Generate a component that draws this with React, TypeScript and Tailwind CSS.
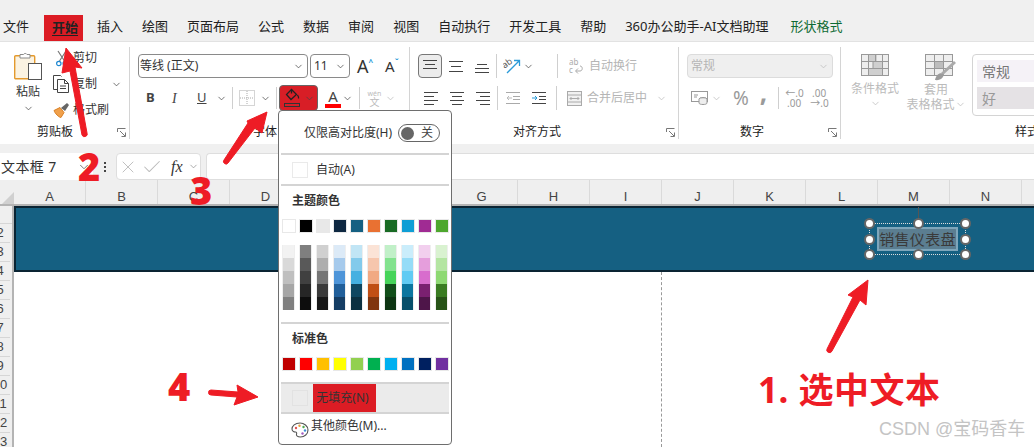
import { ChevronDown, Check, X } from "lucide-react";
import type { ReactNode } from "react";

const TABS = ["插入", "绘图", "页面布局", "公式", "数据", "审阅", "视图", "自动执行", "开发工具", "帮助", "360办公助手-AI文档助理"];
const COLS = ["A", "B", "C", "D", "E", "F", "G", "H", "I", "J", "K", "L", "M", "N", "O"];
const ROWS = ["2", "3", "4", "5", "6", "7", "8", "9", "10", "11", "12", "13"];

const THEME = ["bg-[#ffffff]", "bg-[#000000]", "bg-[#e8e8e8]", "bg-[#0e2841]", "bg-[#156082]", "bg-[#e97132]", "bg-[#196b24]", "bg-[#0f9ed5]", "bg-[#a02b93]", "bg-[#4ea72e]"];
const STANDARD = ["bg-[#c00000]", "bg-[#ff0000]", "bg-[#ffc000]", "bg-[#ffff00]", "bg-[#92d050]", "bg-[#00b050]", "bg-[#00b0f0]", "bg-[#0070c0]", "bg-[#002060]", "bg-[#7030a0]"];
const SHADES = [
  ["bg-[#f2f2f2]", "bg-[#d9d9d9]", "bg-[#bfbfbf]", "bg-[#a6a6a6]", "bg-[#808080]"],
  ["bg-[#7f7f7f]", "bg-[#595959]", "bg-[#404040]", "bg-[#262626]", "bg-[#0d0d0d]"],
  ["bg-[#d0d0d0]", "bg-[#aeaeae]", "bg-[#757575]", "bg-[#3a3a3a]", "bg-[#171717]"],
  ["bg-[#dceaf7]", "bg-[#a6caec]", "bg-[#4e95d9]", "bg-[#215f9a]", "bg-[#153d64]"],
  ["bg-[#c1e5f5]", "bg-[#83caeb]", "bg-[#45b0e1]", "bg-[#0f4761]", "bg-[#0b3041]"],
  ["bg-[#fbe3d6]", "bg-[#f6c6ad]", "bg-[#f1a983]", "bg-[#c04f15]", "bg-[#80350e]"],
  ["bg-[#c1f0c8]", "bg-[#83e28e]", "bg-[#47d45a]", "bg-[#124f1a]", "bg-[#0d3512]"],
  ["bg-[#caedfb]", "bg-[#95dcf7]", "bg-[#61cbf3]", "bg-[#0b769f]", "bg-[#074f6a]"],
  ["bg-[#f2cfee]", "bg-[#e59edc]", "bg-[#d86dcd]", "bg-[#7a2070]", "bg-[#4e1549]"],
  ["bg-[#d9f2d0]", "bg-[#b4e5a2]", "bg-[#8ed973]", "bg-[#3a7c22]", "bg-[#275317]"],
];

function Chev({ className = "" }: { className?: string }) {
  return <ChevronDown size={11} strokeWidth={1.6} className={`shrink-0 text-[#444] ${className}`} />;
}

function Launcher() {
  return (
    <svg width="9" height="9" viewBox="0 0 9 9" className="ml-auto mr-[3px] shrink-0" fill="none" stroke="#777">
      <path d="M.5 4V.5H8.500M3 3l5 5M4.500 8.500h4v-4" />
    </svg>
  );
}

function GroupLabel({ left, children }: { left: string; children: ReactNode }) {
  return (
    <div className="-mb-[1px] mt-auto flex h-[16px] items-center text-[12px] leading-none text-[#222]">
      <span className={left}>{children}</span>
      <Launcher />
    </div>
  );
}

function Lines({ rows, stroke = "#444", className = "" }: { rows: number[][]; stroke?: string; className?: string }) {
  return (
    <svg width="16" height="16" viewBox="0 0 16 16" className={`shrink-0 ${className}`} stroke={stroke} fill="none">
      {rows.map((r) => (
        <path key={r.join()} d={`M${r[0]} ${r[2] + 0.5}H${r[1]}`} />
      ))}
    </svg>
  );
}

function PasteIcon() {
  return (
    <svg width="28" height="30" viewBox="0 0 28 30" className="shrink-0">
      <rect x=".7" y="4.700" width="20" height="23" rx="1" fill="#fbf3e2" stroke="#e49a2d" strokeWidth="1.400" />
      <path d="M6 5.500V3.500h3.500a2 2 0 0 1 3.500 0H16v3.500H6z" fill="#fff" stroke="#8a8a8a" />
      <rect x="14.500" y="12.500" width="13" height="16" fill="#fff" stroke="#555" />
    </svg>
  );
}

function ScissorsIcon() {
  return (
    <svg width="12" height="17" viewBox="0 0 12 17" className="shrink-0" fill="none">
      <path d="M2 1l6.500 10M10 1L3.500 11" stroke="#777" strokeWidth="1.200" />
      <circle cx="2.800" cy="13.500" r="2.200" stroke="#1e88d2" strokeWidth="1.200" />
      <circle cx="9.200" cy="13.500" r="2.200" stroke="#1e88d2" strokeWidth="1.200" />
    </svg>
  );
}

function CopyIcon() {
  return (
    <svg width="16" height="18" viewBox="0 0 16 18" className="shrink-0" fill="#fff" stroke="#444">
      <path d="M4 14.500H.5V.5h7l1 1" fill="none" />
      <path d="M4.500 4.500h7l4 4v9h-11z" />
      <path d="M11.500 4.500v4h4M7 11h6M7 13.500h6" fill="none" />
    </svg>
  );
}

function BrushIcon() {
  return (
    <svg width="17" height="16" viewBox="0 0 17 16" className="shrink-0">
      <path d="M1 8.500l6-3 4 5-3 5c-2 0-6-4-7-7z" fill="#f0a04b" stroke="#d97f22" />
      <path d="M8 6l6-5 2 2-4 6z" fill="#666" />
    </svg>
  );
}

function BorderIcon() {
  return (
    <svg width="16" height="16" viewBox="0 0 16 16" className="shrink-0" fill="none" stroke="#aaa" strokeDasharray="1 1">
      <rect x=".5" y=".5" width="15" height="15" />
      <path d="M8 1v14M1 8h14" />
    </svg>
  );
}

function FillIcon() {
  return (
    <svg width="16" height="20" viewBox="0 0 16 20" className="shrink-0" fill="none">
      <path d="M7.500 1.500l-5 5 4.500 5 5.500-5z" stroke="#222" strokeWidth="1.300" />
      <path d="M7.500 1.500v4M13.500 7c1 1.500 1.500 2.500 1 3.500" stroke="#222" strokeWidth="1.300" />
      <rect x=".5" y="15.500" width="15" height="3" stroke="#333" />
    </svg>
  );
}

function OrientIcon() {
  return (
    <svg width="18" height="18" viewBox="0 0 18 18" className="shrink-0" fill="none">
      <text x="0" y="9" fontSize="9" fill="#555" transform="rotate(-35 5 8)">ab</text>
      <path d="M4 16L16 4M11 3.500h5.500V9" stroke="#2a9ad8" strokeWidth="1.300" />
    </svg>
  );
}

function WrapIcon() {
  return (
    <svg width="15" height="16" viewBox="0 0 15 16" className="shrink-0" fill="none">
      <text x="0" y="7" fontSize="8" fill="#aaa">ab</text>
      <text x="0" y="15" fontSize="8" fill="#aaa">c</text>
      <path d="M7 13h4c3 0 3-5 0-5M9 10.500L6.500 13 9 15.500" stroke="#aaa" />
    </svg>
  );
}

function MergeIcon() {
  return (
    <svg width="15" height="15" viewBox="0 0 15 15" className="shrink-0" fill="none" stroke="#aaa">
      <rect x=".5" y=".5" width="14" height="14" fill="#f1f1f1" />
      <path d="M1 4h13M1 11h13M3 7.500h9M4.500 6L3 7.500 4.500 9M10.500 6L12 7.500 10.500 9" />
    </svg>
  );
}

function IndentIcon({ dir }: { dir: "in" | "out" }) {
  const color = dir === "in" ? "#2a9ad8" : "#bbb";
  const lines = dir === "in" ? "#444" : "#aaa";
  return (
    <svg width="14" height="12" viewBox="0 0 14 12" className="shrink-0" fill="none">
      <path d="M0 .5h14M7 4.500h7M7 7.500h7M0 11.500h14" stroke={lines} />
      <path d={dir === "in" ? "M0 6h5M3 4l2 2-2 2" : "M1 6h5M3 4L1 6l2 2"} stroke={color} />
    </svg>
  );
}

function CellStyleIcon() {
  return (
    <svg width="28" height="22" viewBox="0 0 28 22" className="shrink-0" stroke="#999" fill="#eee">
      <rect x=".5" y=".5" width="27" height="21" />
      <rect x="7" y="1" width="9" height="6" fill="#cfcfcf" stroke="none" />
      <rect x="7" y="14" width="14" height="7" fill="#cfcfcf" stroke="none" />
      <rect x="12" y="7" width="9" height="7" fill="#cfcfcf" stroke="none" />
      <path d="M1 7.500h26M1 14.500h26M7.500 1v20M14.500 1v6M21.500 1v20M12 7.500v7" fill="none" />
    </svg>
  );
}

function TableStyleIcon() {
  return (
    <svg width="32" height="28" viewBox="0 0 32 28" className="shrink-0" fill="none">
      <rect x=".5" y=".5" width="27" height="21" fill="#eee" stroke="#999" />
      <rect x="10" y="8" width="9" height="7" fill="#bdbdbd" />
      <path d="M1 7.500h26M1 14.500h26M9.500 1v20M18.500 1v20" stroke="#999" />
      <path d="M30 8L17 20" stroke="#aaa" strokeWidth="3" />
      <path d="M10 26c1-5 5-8 8-6 2 3-3 7-8 6z" fill="#9b9b9b" />
    </svg>
  );
}

function PaletteIcon() {
  return (
    <svg width="18" height="16" viewBox="0 0 18 16" className="shrink-0" fill="none">
      <path d="M9 1C4 1 1 4 1 7c0 2 2 3 3.500 3 1 0 1.500 1 1 2-.5 1.500 1 3 4 3 4 0 7.500-3 7.500-7S13 1 9 1z" stroke="#555" strokeWidth="1.100" />
      <circle cx="5" cy="6" r="1.200" fill="#e05252" />
      <circle cx="8.500" cy="3.800" r="1.200" fill="#e9a23b" />
      <circle cx="12.500" cy="5" r="1.200" fill="#4fa84f" />
      <circle cx="14" cy="8.500" r="1.200" fill="#3d8fd6" />
      <circle cx="11.500" cy="11.500" r="1.200" fill="#a45bc1" />
    </svg>
  );
}

function Ribbon() {
  return (
    <div className="flex h-[103px] shrink-0 overflow-hidden border-t border-[#e2e2e2] bg-white text-[12px] text-[#333]">
      {/* clipboard */}
      <div className="my-[5px] flex w-[130px] shrink-0 flex-col border-r border-[#d4d4d4]">
        <div className="flex">
          <div className="ml-[14px] flex w-[28px] flex-col items-center pt-[4px]">
            <PasteIcon />
            <span className="mt-[3px] whitespace-nowrap leading-[16px]">粘贴</span>
            <Chev className="mt-[3px]" />
          </div>
          <div className="-mt-[2px] ml-[11px] flex flex-col">
            <div className="flex h-[26px] items-center gap-[5px] pl-[3px]"><ScissorsIcon /><span>剪切</span></div>
            <div className="flex h-[26px] items-center gap-[4px]"><CopyIcon /><span>复制</span><Chev className="ml-[10px]" /></div>
            <div className="flex h-[26px] items-center gap-[3px]"><BrushIcon /><span>格式刷</span></div>
          </div>
        </div>
        <GroupLabel left="ml-[37px]">剪贴板</GroupLabel>
      </div>

      {/* font */}
      <div className="my-[5px] flex w-[280px] shrink-0 flex-col border-r border-[#d4d4d4]">
        <div className="mt-[7px] flex h-[24px] items-center pl-[8px]">
          <div className="flex h-[24px] w-[170px] items-center justify-between rounded-[4px] border border-[#8a8a8a] pl-[1px] pr-[3px]">
            <span>等线 (正文)</span><Chev />
          </div>
          <div className="ml-[2px] flex h-[24px] w-[40px] items-center justify-between rounded-[4px] border border-[#8a8a8a] pl-[3px] pr-[3px]">
            <span>11</span><Chev />
          </div>
          <span className="ml-[7px] text-[18px] leading-none">A</span>
          <span className="-mt-[8px] text-[8px] font-bold text-[#2a9ad8]">^</span>
          <span className="ml-[12px] text-[15px] leading-none">A</span>
          <span className="-mt-[8px] text-[8px] font-bold text-[#2a9ad8]">ˇ</span>
        </div>
        <div className="mt-[8px] flex h-[24px] items-center pl-[16px]">
          <span className="w-[26px] text-[13px] font-bold text-[#444]">B</span>
          <span className="w-[25px] font-['Liberation_Serif',serif] text-[14px] italic text-[#444]">I</span>
          <span className="w-[19px] text-[13px] text-[#444] underline">U</span>
          <Chev />
          <div className="ml-[5px] h-[22px] w-px bg-[#cfcfcf]" />
          <div className="ml-[6px]"><BorderIcon /></div>
          <Chev className="ml-[5px]" />
          <div className="ml-[5px] h-[22px] w-px bg-[#cfcfcf]" />
          <div className="ml-[2px] flex h-[26px] w-[39px] items-center gap-[4px] rounded-[4px] border border-[#666] bg-[#d81e26] pl-[4px]">
            <FillIcon /><Chev className="text-[#222]" />
          </div>
          <div className="ml-[7px] flex w-[16px] flex-col items-center">
            <span className="text-[15px] leading-[16px] text-[#444]">A</span>
            <div className="h-[4px] w-[16px] bg-[#ff0000]" />
          </div>
          <Chev className="ml-[1px]" />
          <div className="ml-[6px] h-[22px] w-px bg-[#cfcfcf]" />
          <div className="ml-[7px] flex w-[15px] flex-col items-center leading-none text-[#bbb]">
            <span className="text-[7px]">wén</span>
            <span className="text-[10px]">文</span>
          </div>
          <Chev className="ml-[3px] text-[#bbb]" />
        </div>
        <GroupLabel left="ml-[123px]">字体</GroupLabel>
      </div>

      {/* alignment */}
      <div className="my-[5px] flex w-[269px] shrink-0 flex-col border-r border-[#d4d4d4]">
        <div className="mt-[7px] flex h-[24px] items-center pl-[8px]">
          <div className="flex h-[24px] w-[24px] items-center justify-center rounded-[4px] border border-[#777] bg-[#ececec]">
            <Lines rows={[[1, 15, 2], [3, 13, 6], [1, 15, 10]]} />
          </div>
          <Lines className="ml-[6px]" rows={[[1, 15, 3], [3, 13, 8], [1, 15, 13]]} />
          <Lines className="ml-[10px]" rows={[[3, 13, 6], [1, 15, 10], [1, 15, 14]]} />
          <div className="ml-[6px] h-[24px] w-px bg-[#cfcfcf]" />
          <div className="ml-[6px]"><OrientIcon /></div>
          <Chev className="ml-[2px]" />
          <div className="ml-[23px] h-[24px] w-px bg-[#cfcfcf]" />
          <div className="ml-[11px] flex items-center gap-[5px] text-[#b5b5b5]"><WrapIcon /><span>自动换行</span></div>
        </div>
        <div className="mt-[8px] flex h-[24px] items-center pl-[13px]">
          <Lines rows={[[1, 15, 2], [1, 11, 6], [1, 15, 10], [1, 11, 14]]} />
          <Lines className="ml-[10px]" rows={[[1, 15, 2], [3, 13, 6], [1, 15, 10], [3, 13, 14]]} />
          <Lines className="ml-[10px]" rows={[[1, 15, 2], [5, 15, 6], [1, 15, 10], [5, 15, 14]]} />
          <div className="ml-[6px] h-[24px] w-px bg-[#cfcfcf]" />
          <div className="ml-[8px]"><IndentIcon dir="out" /></div>
          <div className="ml-[12px]"><IndentIcon dir="in" /></div>
          <div className="ml-[10px] h-[24px] w-px bg-[#cfcfcf]" />
          <div className="ml-[10px] flex items-center gap-[5px] text-[#b5b5b5]"><MergeIcon /><span>合并后居中</span></div>
          <Chev className="ml-[9px] text-[#bbb]" />
        </div>
        <GroupLabel left="ml-[103px]">对齐方式</GroupLabel>
      </div>

      {/* number */}
      <div className="my-[5px] flex w-[162px] shrink-0 flex-col border-r border-[#d4d4d4]">
        <div className="mt-[7px] flex h-[24px] pl-[8px]">
          <div className="flex h-[24px] w-[146px] items-center justify-between rounded-[4px] border border-[#dcdcdc] bg-[#efefef] pl-[3px] pr-[3px] text-[#b5b5b5]">
            <span>常规</span><Chev className="text-[#bbb]" />
          </div>
        </div>
        <div className="mt-[8px] flex h-[24px] items-center pl-[12px] text-[#9a9a9a]">
          <svg width="17" height="14" viewBox="0 0 17 14" className="shrink-0" fill="none" stroke="#999">
            <rect x=".5" y=".5" width="16" height="10" />
            <ellipse cx="12" cy="8" rx="4" ry="1.500" fill="#ddd" />
            <path d="M8 8v4c0 2 8 2 8 0V8" fill="#eee" />
            <path d="M3 4h4M3 6h3" />
          </svg>
          <Chev className="ml-[3px] text-[#bbb]" />
          <span className="ml-[11px] text-[19px] leading-none">%</span>
          <span className="-mt-[12px] ml-[11px] text-[26px] font-bold leading-none">,</span>
          <div className="ml-[11px] h-[22px] w-px bg-[#cfcfcf]" />
          <span className="ml-[6px] w-[16px] whitespace-nowrap text-right text-[10px] leading-[10px]">←.0<br />.00</span>
          <span className="ml-[9px] w-[16px] whitespace-nowrap text-right text-[10px] leading-[10px]">.00<br />→.0</span>
        </div>
        <GroupLabel left="ml-[61px]">数字</GroupLabel>
      </div>

      {/* styles */}
      <div className="my-[5px] flex shrink-0 flex-col">
        <div className="mt-[7px] flex h-[62px]">
          <div className="ml-[10px] flex w-[48px] flex-col items-center text-[#bbb]">
            <CellStyleIcon />
            <span className="mt-[5px] whitespace-nowrap text-[12px] leading-[16px]">条件格式</span>
            <Chev className="mt-[1px] text-[#bbb]" />
          </div>
          <div className="ml-[8px] flex w-[58px] flex-col items-center text-[#bbb]">
            <div className="pl-[10px]"><TableStyleIcon /></div>
            <span className="whitespace-nowrap text-[12px] leading-[15px]">套用</span>
            <div className="flex items-center whitespace-nowrap text-[12px] leading-[15px]">表格格式<Chev className="text-[#bbb]" /></div>
          </div>
          <div className="ml-[7px] flex h-[62px] w-[80px] shrink-0 flex-col gap-[5px] rounded-[4px] border border-[#d4d4d4] py-[5px] pl-[4px]">
            <div className="flex h-[22px] items-center bg-[#f5f2f7] pl-[5px] text-[14px] text-[#777]">常规</div>
            <div className="flex h-[22px] items-center bg-[#e5e2e5] pl-[5px] text-[14px] text-[#999]">好</div>
          </div>
        </div>
        <div className="-mb-[1px] mt-auto flex h-[16px] items-center text-[12px] leading-none text-[#222]">
          <span className="ml-[174px] whitespace-nowrap">样式</span>
        </div>
      </div>
    </div>
  );
}

function FormulaBar() {
  return (
    <div className="mt-[9px] flex h-[27px] shrink-0 items-stretch">
      <div className="flex w-[93px] items-center justify-between rounded-r-[4px] bg-white pl-[1px] pr-[2px] text-[14px] tracking-[0.4px] text-[#333]">
        <span className="whitespace-nowrap">文本框 7</span>
        <ChevronDown size={14} strokeWidth={1.5} className="text-[#666]" />
      </div>
      <div className="ml-[6px] flex w-[12px] flex-col items-center justify-center gap-[2px]">
        <div className="size-[2px] bg-[#444]" /><div className="size-[2px] bg-[#444]" /><div className="size-[2px] bg-[#444]" />
      </div>
      <div className="ml-[5px] flex w-[85px] items-center rounded-[4px] border border-[#dedede] bg-white pl-[1px]">
        <X size={20} strokeWidth={1.1} className="shrink-0 text-[#bbb]" />
        <Check size={22} strokeWidth={1.1} className="ml-[3px] shrink-0 text-[#bbb]" />
        <span className="ml-[8px] font-['Liberation_Serif',serif] text-[16px] italic leading-none text-[#333]">fx</span>
        <ChevronDown size={11} strokeWidth={1.5} className="ml-[5px] shrink-0 text-[#888]" />
      </div>
      <div className="ml-[5px] flex-1 rounded-l-[4px] border border-r-0 border-[#dedede] bg-white" />
    </div>
  );
}

function Handle({ className }: { className: string }) {
  return <div className={`absolute size-[11px] rounded-full border-2 border-[#666] bg-white ${className}`} />;
}

function Sheet() {
  return (
    <div className="flex flex-1 flex-col overflow-hidden">
      <div className="flex h-[26px] shrink-0 border-b-2 border-[#b4b4b4] bg-[#efefef]">
        <div className="flex w-[14px] shrink-0 items-end justify-end">
          <div className="size-0 border-b-[12px] border-l-[12px] border-b-[#d0d0d0] border-l-transparent" />
        </div>
        {COLS.map((c) => (
          <div key={c} className="flex w-[72px] shrink-0 items-end justify-center border-r border-[#dadada] font-['Liberation_Sans',sans-serif] text-[13px] leading-[14px] text-[#444]">{c}</div>
        ))}
      </div>
      <div className="flex flex-1 overflow-hidden">
        <div className="w-[14px] shrink-0 overflow-hidden border-r-2 border-[#b4b4b4] bg-[#efefef]">
          <div className="h-[18px] border-b border-[#d6d6d6]" />
          {ROWS.map((r) => (
            <div key={r} className="-ml-[10px] flex h-[19px] w-[20px] items-center justify-center border-b border-[#d6d6d6] font-['Liberation_Sans',sans-serif] text-[13px] text-[#444]">{r}</div>
          ))}
        </div>
        <div className="flex flex-1 flex-col bg-white">
          <div className="relative h-[66px] shrink-0 border-y-2 border-l-2 border-[#0a2433] bg-[#156082]">
            {/* selected text box */}
            <div className="absolute left-[853px] top-[15px] h-[32px] w-[97px] border border-dotted border-[#dddddd]">
              <div className="absolute -top-[17px] left-[48px] h-[17px] w-px bg-[#555]" />
              <div className="absolute inset-x-[7px] inset-y-[3px] flex items-center justify-center whitespace-nowrap border-2 border-[#7ea6bb] bg-[#5b7e91] text-[15px] tracking-[0.3px] text-[#3a3a3a]">销售仪表盘</div>
              <Handle className="-left-[6px] -top-[6px]" />
              <Handle className="left-[43px] -top-[6px]" />
              <Handle className="-right-[6px] -top-[6px]" />
              <Handle className="-left-[6px] top-[10px]" />
              <Handle className="-right-[6px] top-[10px]" />
              <Handle className="-left-[6px] -bottom-[6px]" />
              <Handle className="left-[43px] -bottom-[6px]" />
              <Handle className="-right-[6px] -bottom-[6px]" />
            </div>
          </div>
          <div className="ml-[647px] w-0 flex-1 border-l border-dashed border-[#999]" />
        </div>
      </div>
    </div>
  );
}

function Divider() {
  return <div className="mx-[2px] h-[2px] shrink-0 bg-[#d4d4d4]" />;
}

function Swatches({ colors }: { colors: string[] }) {
  return (
    <div className="flex gap-[3px] pl-[3px]">
      {colors.map((c) => (
        <div key={c} className={`size-[14px] border border-[#e8e8e8] ${c}`} />
      ))}
    </div>
  );
}

function FillMenu() {
  return (
    <div className="absolute left-[278px] top-[110px] flex h-[335px] w-[174px] flex-col rounded-[4px] border border-[#6e6e6e] bg-white text-[12px] leading-none text-[#333]">
      <div className="flex h-[42px] shrink-0 items-center pl-[25px] pt-[2px]">
        <span className="whitespace-nowrap">仅限高对比度(H)</span>
        <div className="ml-[6px] flex h-[18px] w-[42px] items-center justify-between rounded-full border border-[#666] pl-[2px] pr-[6px]">
          <div className="size-[13px] rounded-full bg-[#666]" />
          <span className="text-[12px] text-[#444]">关</span>
        </div>
      </div>
      <Divider />
      <div className="flex h-[29px] shrink-0 items-center pl-[13px]">
        <div className="size-[16px] border border-[#eaeaea]" />
        <span className="ml-[8px]">自动(A)</span>
      </div>
      <Divider />
      <div className="flex h-[33px] shrink-0 items-center pb-[3px] pl-[13px] font-bold">主题颜色</div>
      <Swatches colors={THEME} />
      <div className="mt-[12px] flex gap-[4px] pl-[3px]">
        {SHADES.map((col) => (
          <div key={col[0]} className="flex w-[13px] flex-col border-x border-[#eeeeee]">
            {col.map((c) => <div key={c} className={`h-[13px] ${c}`} />)}
          </div>
        ))}
      </div>
      <div className="mt-[12px]"><Divider /></div>
      <div className="flex h-[33px] shrink-0 items-center pb-[3px] pl-[13px] font-bold">标准色</div>
      <Swatches colors={STANDARD} />
      <div className="mt-[11px]"><Divider /></div>
      <div className="mx-[2px] flex h-[28px] shrink-0 items-center bg-[#ebebeb] pl-[11px]">
        <div className="size-[16px] border border-[#e2e2e2]" />
        <div className="ml-[5px] flex h-[28px] w-[63px] items-center justify-center whitespace-nowrap bg-[#dc1c24] pr-[4px] text-[#333]">无填充(N)</div>
      </div>
      <Divider />
      <div className="flex flex-1 items-center pb-[10px] pl-[12px]">
        <div className="mt-[8px]"><PaletteIcon /></div>
        <span className="ml-[2px] whitespace-nowrap">其他颜色(M)...</span>
      </div>
    </div>
  );
}

function Annotations() {
  return (
    <>
      <svg width="1034" height="447" viewBox="0 0 1034 447" className="pointer-events-none absolute inset-0" fill="#ee1c25" stroke="#ee1c25" strokeLinejoin="round">
        <path d="M66 48L82 68 75 67 87 133a2.500 2.500 0 0 1-5 2L70 71 62 73z" />
        <path d="M267 112L262 133 255 128 228 163a2.500 2.500 0 0 1-4-3L248 123 247 121z" />
        <path d="M258 397L234 405 237 397 211 395a2.500 2.500 0 0 1 0-5L238 392 237 385z" />
        <path d="M868 280L866 305 860 300 832 351a2.500 2.500 0 0 1-5-2L853 297 848 295z" />
      </svg>
      <span className="absolute left-[78px] top-[144px] font-['Noto_Sans',sans-serif] text-[38px] font-black leading-[44px] text-[#ee1c25]">2</span>
      <span className="absolute left-[190px] top-[168px] font-['Noto_Sans',sans-serif] text-[38px] font-black leading-[44px] text-[#ee1c25]">3</span>
      <span className="absolute left-[168px] top-[364px] font-['Noto_Sans',sans-serif] text-[38px] font-black leading-[44px] text-[#ee1c25]">4</span>
      <span className="absolute left-[758px] top-[368px] whitespace-nowrap text-[35px] font-bold leading-[44px] tracking-[0.5px] text-[#ee1c25]">1. 选中文本</span>
      <span className="absolute left-[879px] top-[417px] whitespace-nowrap font-['Liberation_Sans','Noto_Sans_CJK_SC',sans-serif] text-[18px] leading-[24px] text-[#c4c4c4]">CSDN @宝码香车</span>
    </>
  );
}

export default function App() {
  return (
    <div className="relative flex h-[447px] w-[1034px] flex-col overflow-hidden bg-[#f0f0f0] font-['Noto_Sans','Noto_Sans_CJK_SC',sans-serif]">
      <div className="flex h-[41px] shrink-0 items-end gap-[19px] whitespace-nowrap pb-[4px] pl-[3px] text-[13px] leading-[22px] text-[#222]">
        <span className="mr-[4px]">文件</span>
        <span className="-ml-[8px] -mr-[5px] -mb-[4px] h-[26px] bg-[#dc1c24] pl-[8px] pr-[5px] font-bold leading-[24px] text-[#222] underline underline-offset-[3px]">开始</span>
        {TABS.map((t) => <span key={t}>{t}</span>)}
        <span className="ml-[3px] text-[#0e6b33]">形状格式</span>
      </div>
      <Ribbon />
      <FormulaBar />
      <Sheet />
      <FillMenu />
      <Annotations />
    </div>
  );
}
